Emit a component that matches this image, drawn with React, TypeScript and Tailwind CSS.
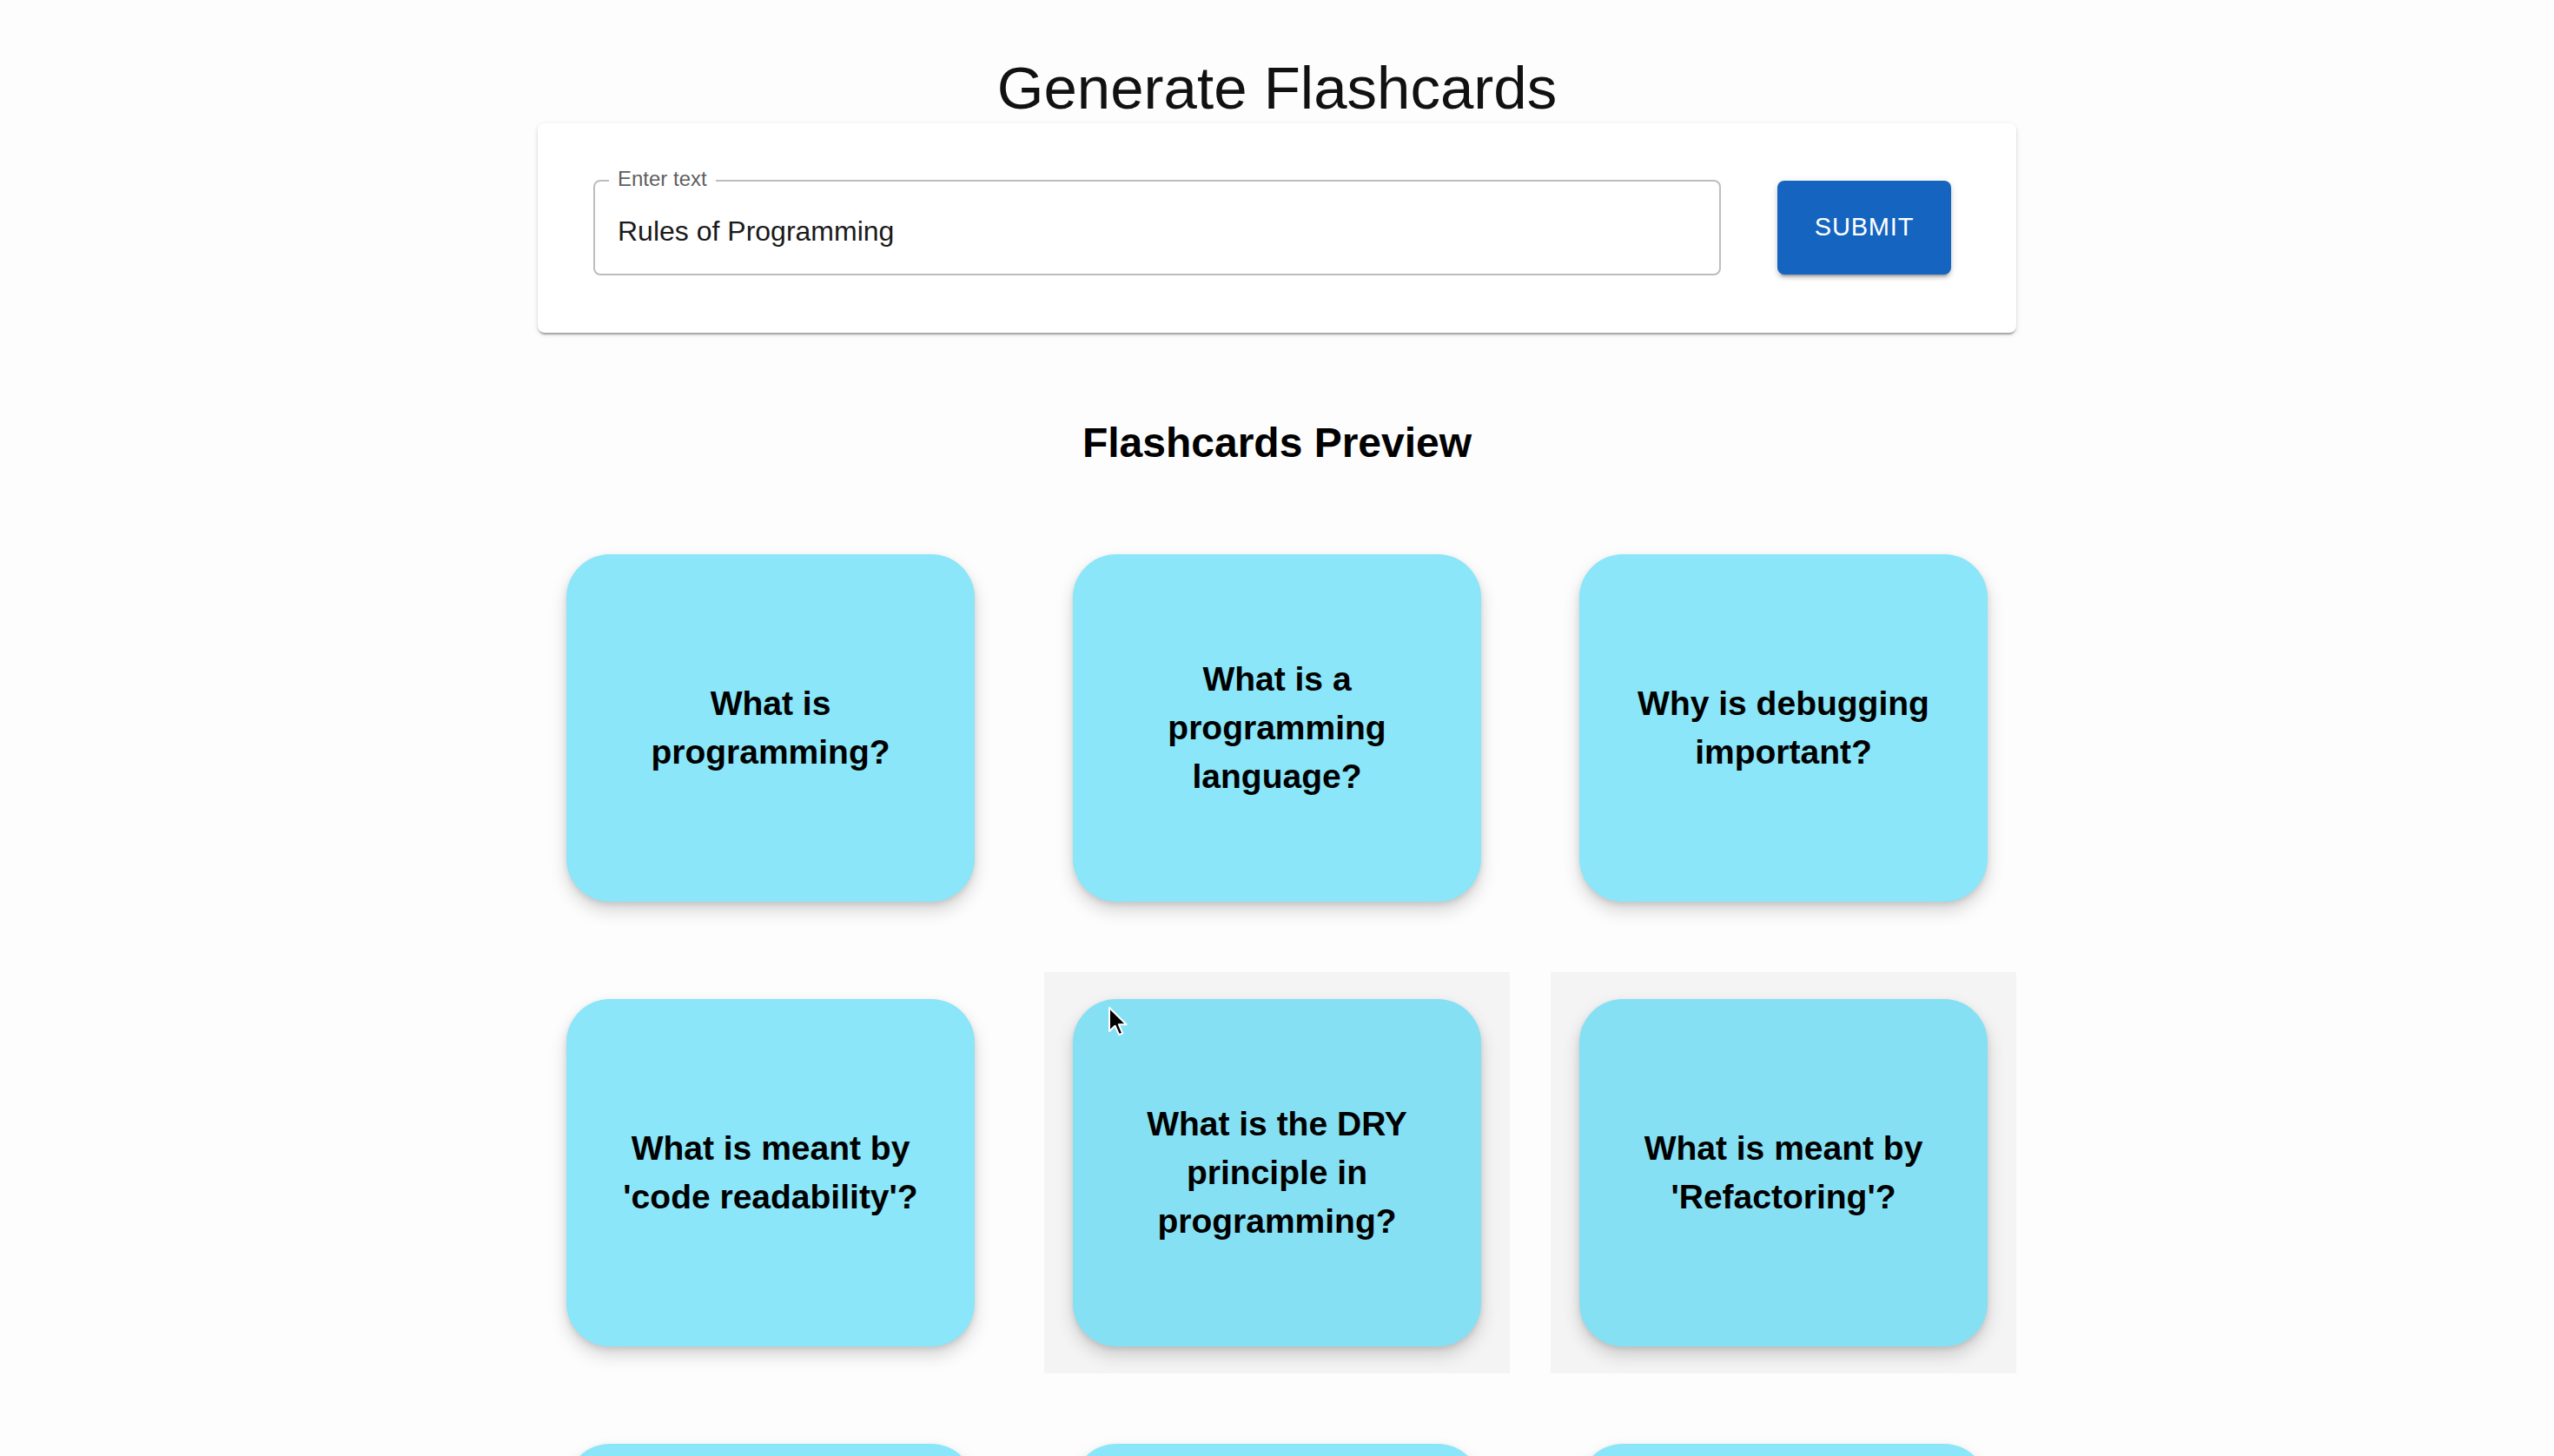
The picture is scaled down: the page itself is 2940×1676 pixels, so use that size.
import { useState } from 'react';

const font = { fontFamily: '"Liberation Sans", Arial, Helvetica, sans-serif' };

type Card = { question: string; hovered?: boolean };

const cards: Card[] = [
  { question: 'What is programming?' },
  { question: 'What is a programming language?' },
  { question: 'Why is debugging important?' },
  { question: "What is meant by 'code readability'?" },
  { question: 'What is the DRY principle in programming?', hovered: true },
  { question: "What is meant by 'Refactoring'?", hovered: true },
  { question: 'What is an algorithm?' },
  { question: 'What is version control?' },
  { question: 'Why should code be tested?' },
];

function Cursor() {
  return (
    <svg
      className="absolute left-[73px] top-[39px] pointer-events-none"
      width="24"
      height="36"
      viewBox="0 0 12 18"
    >
      <path
        d="M1 1 L1 14.5 L4.3 11.4 L6.6 16.6 L8.6 15.7 L6.4 10.6 L10.8 10.6 Z"
        fill="#000"
        stroke="#fff"
        strokeWidth="1"
        strokeLinejoin="round"
      />
    </svg>
  );
}

export default function App() {
  const [text, setText] = useState('Rules of Programming');

  return (
    <div className="min-h-screen bg-[#fdfdfd] text-black" style={font}>
      <div className="mx-auto w-[1702px] pt-[61px]">
        <h1 className="text-center text-[69px] leading-[81px] font-normal text-[#111]">
          Generate Flashcards
        </h1>

        {/* input panel */}
        <div className="bg-white rounded-[8px] pl-[64px] pr-[75px] pt-[65px] pb-[66px] shadow-[0_4px_2px_-2px_rgba(0,0,0,0.2),0_2px_2px_0_rgba(0,0,0,0.14),0_2px_6px_0_rgba(0,0,0,0.12)]">
          <div className="flex items-center gap-[65px]">
            <div className="relative flex-1 h-[110px] border-2 border-[#bdbdbd] rounded-[8px] flex items-center px-[26px]">
              <span className="absolute left-[16px] -top-[15px] px-[10px] bg-white text-[24px] leading-[24px] text-[#5f5f5f]">
                Enter text
              </span>
              <input
                value={text}
                onChange={(e) => setText(e.target.value)}
                className="w-full h-[46px] mt-[8px] leading-[46px] text-[32px] text-[#1a1a1a] bg-transparent outline-none"
                style={font}
              />
            </div>
            <button
              type="button"
              className="w-[200px] h-[108px] rounded-[8px] bg-[#1565c0] text-white text-[29px] font-medium tracking-[0.8px] shadow-[0_6px_2px_-4px_rgba(0,0,0,0.2),0_4px_4px_0_rgba(0,0,0,0.14),0_2px_10px_0_rgba(0,0,0,0.12)]"
              style={font}
            >
              SUBMIT
            </button>
          </div>
        </div>

        <h2 className="mt-[95px] text-center text-[48px] leading-[64px] font-bold">
          Flashcards Preview
        </h2>

        <div className="mt-[65px] grid grid-cols-3 gap-x-[47px] gap-y-[50px] pb-[80px]">
          {cards.map((card, i) => (
            <div
              key={i}
              className={
                'relative h-[462px] flex items-center justify-center ' +
                (card.hovered ? 'bg-[#f4f4f4]' : '')
              }
            >
              <div
                className={
                  'w-[470px] h-[400px] rounded-[50px] flex items-center justify-center px-[32px] text-center shadow-[0_10px_20px_rgba(0,0,0,0.16),0_3px_6px_rgba(0,0,0,0.1)] ' +
                  (card.hovered ? 'bg-[#86e0f4]' : 'bg-[#8ae6f8]')
                }
              >
                <p className="text-[39px] leading-[56px] font-bold text-black">
                  {card.question}
                </p>
              </div>
              {i === 4 && <Cursor />}
            </div>
          ))}
        </div>
      </div>
    </div>
  );
}
